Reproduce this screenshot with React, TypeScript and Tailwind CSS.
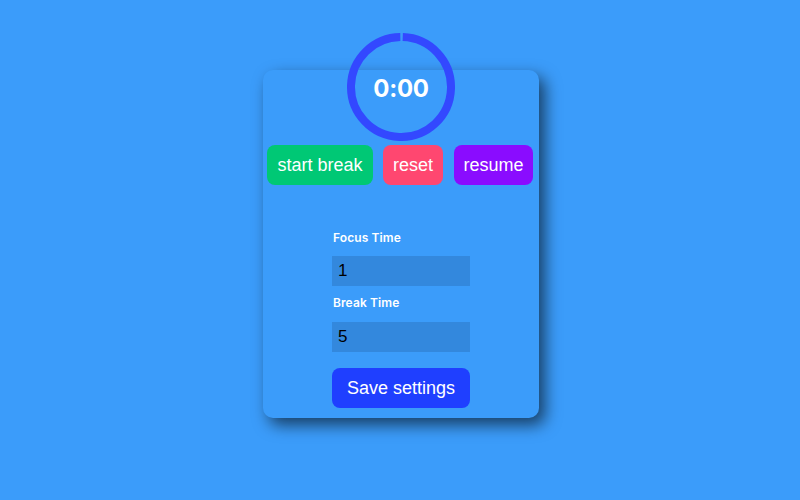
import React from "react";

export default function App() {
  const r = 50;
  const c = 2 * Math.PI * r;
  return (
    <div className="w-full h-[500px] bg-[#3b9cfa] flex" style={{ fontFamily: '"Liberation Sans", Arial, sans-serif' }}>
      <div className="mt-[70px] ml-[263px] w-[276px] h-[348px] rounded-[10px] bg-[#3b9cfa] shadow-[6px_7px_16px_rgba(0,0,0,0.6)] flex flex-col">
        <div className="relative mt-[-37px] w-[108px] h-[108px] ml-[84px]">
          <svg width="108" height="108" viewBox="0 0 108 108" className="absolute inset-0">
            <circle
              cx="54"
              cy="54"
              r={r}
              fill="none"
              stroke="#3348ff"
              strokeWidth="8"
              strokeDasharray={`${c - 3} ${c}`}
              transform="rotate(-88 54 54)"
            />
          </svg>
          <div
            className="absolute inset-0 pt-[3px] flex items-center justify-center text-white text-[24px] font-bold tracking-[-0.3px]"
            style={{ fontFamily: 'Inter, "Open Sans", sans-serif' }}
          >
            0:00
          </div>
        </div>
        <div className="flex mt-[4px] pl-[4px] text-white text-[18px]">
          <button className="w-[106px] h-[40px] rounded-[8px] bg-[#00c875]">start break</button>
          <button className="ml-[10px] w-[60px] h-[40px] rounded-[8px] bg-[#ff4770]">reset</button>
          <button className="ml-[11px] w-[79px] h-[40px] rounded-[8px] bg-[#8a0cff]">resume</button>
        </div>
        <div className="w-[138px] ml-[69px] mt-[45px] flex flex-col">
          <label
            className="h-[16px] leading-[16px] text-[12px] font-semibold text-white pl-[1px] tracking-[0.1px]"
            style={{ fontFamily: 'Inter, "Open Sans", sans-serif' }}
          >
            Focus Time
          </label>
          <input
            readOnly
            value="1"
            className="mt-[10px] h-[30px] w-[138px] bg-[#3388dd] pl-[6px] text-[17px] text-black outline-none"
          />
          <label
            className="mt-[9px] h-[16px] leading-[16px] text-[12px] font-semibold text-white pl-[1px] tracking-[0.1px]"
            style={{ fontFamily: 'Inter, "Open Sans", sans-serif' }}
          >
            Break Time
          </label>
          <input
            readOnly
            value="5"
            className="mt-[11px] h-[30px] w-[138px] bg-[#3388dd] pl-[6px] text-[17px] text-black outline-none"
          />
          <button className="mt-[16px] h-[40px] w-[138px] rounded-[8px] bg-[#1f3fff] text-white text-[18px]">
            Save settings
          </button>
        </div>
      </div>
    </div>
  );
}
